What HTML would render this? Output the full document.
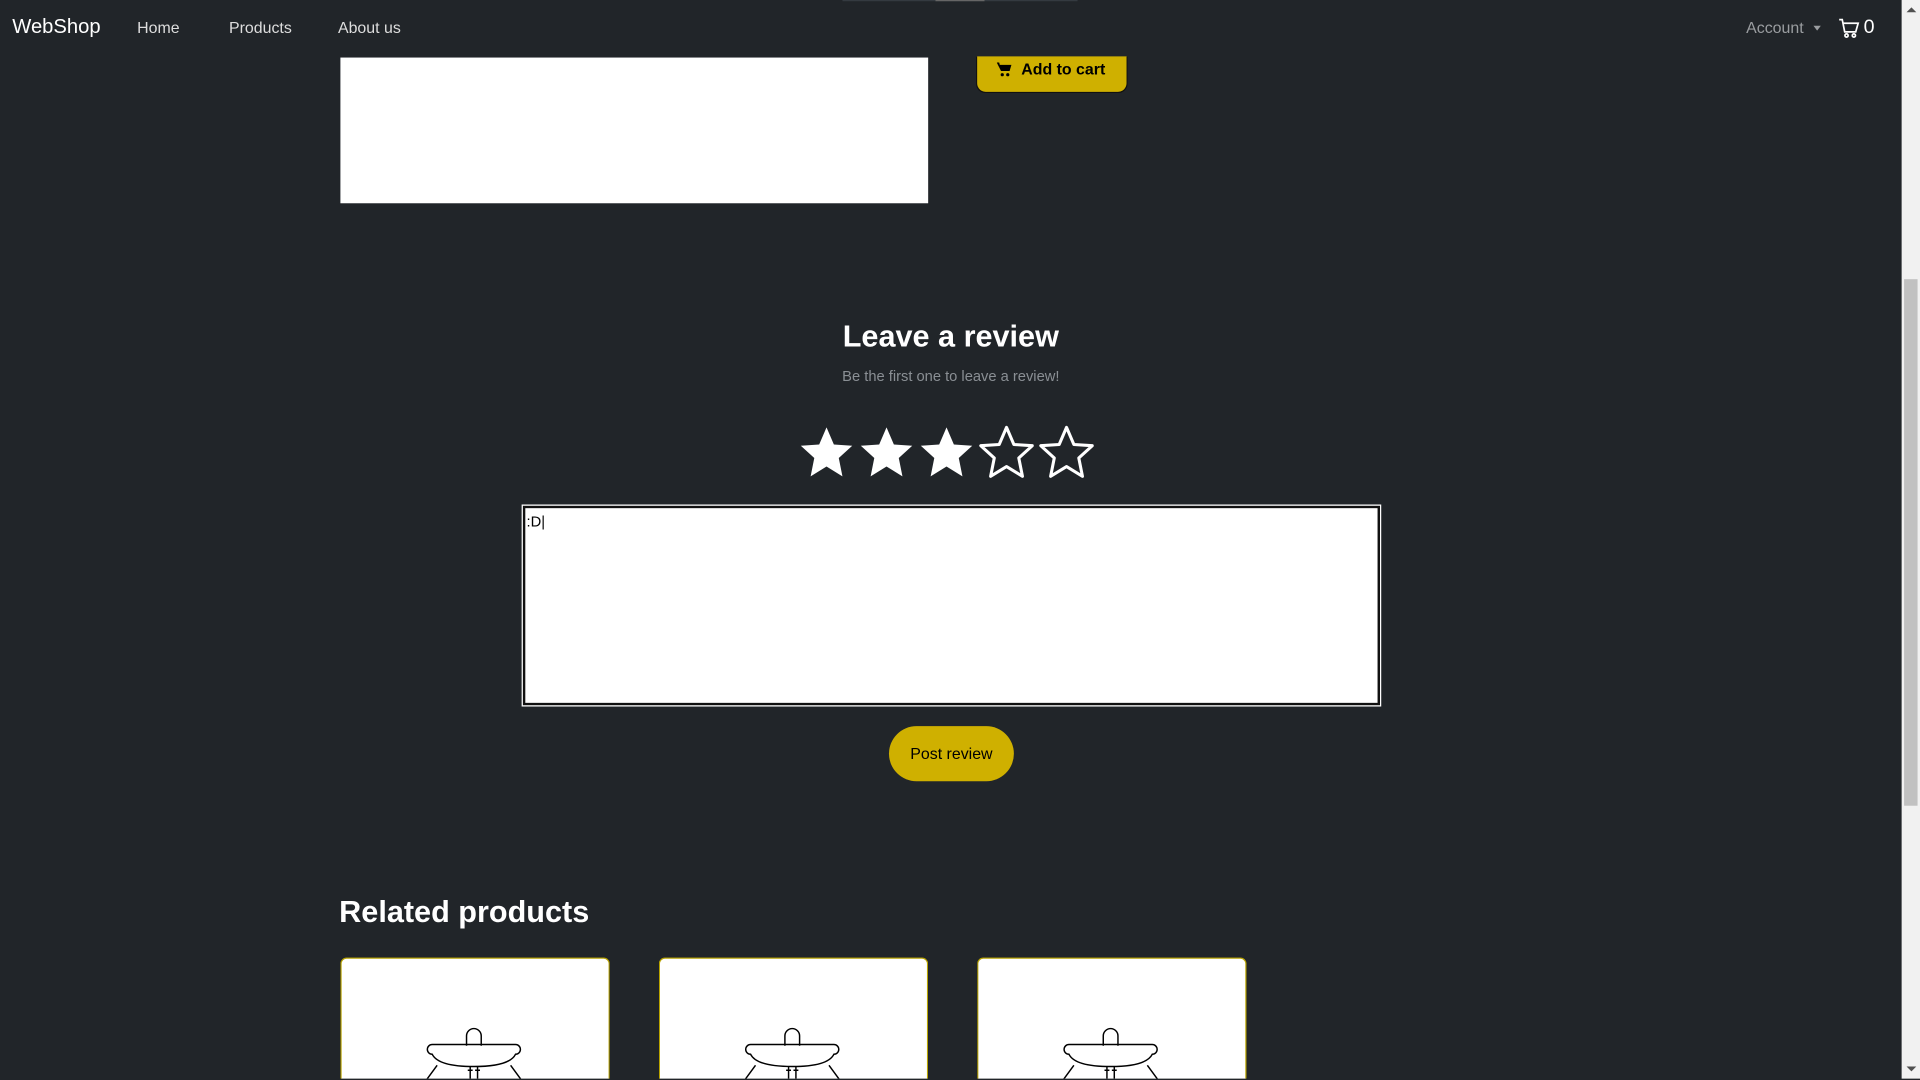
<!DOCTYPE html>
<html><head><meta charset="utf-8"><style>
html,body{margin:0;padding:0;background:#212529;overflow:hidden;width:1920px;height:1080px}
#w{position:absolute;left:0;top:0;width:1568px;height:881px;overflow:hidden;transform:scale(1.22449);transform-origin:0 0;font-family:"Liberation Sans",sans-serif;color:#fff}
.a{position:absolute}
.nav{font-size:13px;color:#ddd;top:15px}
.card{position:absolute;top:782px;width:218px;height:98px;background:#fff;border:1px solid #b8a300;border-bottom:none;border-radius:5px 5px 0 0}
</style></head><body><div id="w">
<div class="a" style="left:688px;top:0;width:192px;height:1px;background:#343a40"></div>
<div class="a" style="left:764px;top:0;width:40px;height:1px;background:#666"></div>
<div class="a" style="left:10px;top:13px;font-size:16.5px;color:#fff">WebShop</div>
<div class="a nav" style="left:112px">Home</div>
<div class="a nav" style="left:187px">Products</div>
<div class="a nav" style="left:276px">About us</div>
<div class="a nav" style="left:1426px;color:#9a9da0">Account</div>
<div class="a" style="left:1481px;top:21px;width:0;height:0;border-left:3px solid transparent;border-right:3px solid transparent;border-top:4px solid #9a9da0"></div>
<svg class="a" style="left:1501px;top:14px" width="18" height="18" viewBox="0 0 18 18" fill="none" stroke="#fff" stroke-width="1.4"><path d="M1 2h2.5l2 10h9l2-7H4.5"/><circle cx="7" cy="15" r="1.3"/><circle cx="13" cy="15" r="1.3"/></svg>
<div class="a" style="left:1522px;top:14px;font-size:16px;color:#fff">0</div>

<div class="a" style="left:278px;top:47px;width:480px;height:119px;background:#fff"></div>
<div class="a" style="left:797px;top:46px;width:122px;height:29px;background:#cfb000;border:1px solid #111;border-top:none;border-radius:0 0 8px 8px"></div>
<svg class="a" style="left:814px;top:50px" width="13" height="13" viewBox="0 0 13 13" fill="#000"><path d="M0 1h2l.5 2H12l-1.5 5H3.5z"/><circle cx="4.5" cy="11" r="1.3"/><circle cx="9" cy="11" r="1.3"/></svg>
<div class="a" style="left:834px;top:49px;font-size:13px;font-weight:bold;color:#000">Add to cart</div>

<div class="a" style="left:0;width:1553px;top:261px;text-align:center;font-size:25px;font-weight:bold">Leave a review</div>
<div class="a" style="left:0;width:1553px;top:300px;text-align:center;font-size:12px;color:#8a8f94">Be the first one to leave a review!</div>
<svg class="a" style="left:650px;top:347px" width="250" height="46" viewBox="0 0 250 46">
<defs><path id="s" d="M0-21L6-7 21-6 10 4 13 19 0 11-13 19-10 4-21-6-6-7z"/></defs>
<use href="#s" x="25" y="23" fill="#fff"/><use href="#s" x="74" y="23" fill="#fff"/><use href="#s" x="123" y="23" fill="#fff"/>
<use href="#s" x="172" y="23" fill="none" stroke="#fff" stroke-width="2.5" stroke-linejoin="round"/><use href="#s" x="221" y="23" fill="none" stroke="#fff" stroke-width="2.5" stroke-linejoin="round"/>
</svg>
<div class="a" style="left:427px;top:413px;width:696px;height:159px;background:#fff;border:2px solid #111;outline:1px solid #fff"></div>
<div class="a" style="left:430px;top:419px;font-size:12px;color:#000">:D|</div>
<div class="a" style="left:726px;top:593px;width:102px;height:45px;background:#cfb000;border-radius:23px;color:#000;font-size:13px;text-align:center;line-height:45px">Post review</div>
<div class="a" style="left:277px;top:731px;font-size:25px;font-weight:bold">Related products</div>
<div class="card" style="left:278px"></div>
<div class="card" style="left:538px"></div>
<div class="card" style="left:798px"></div>
<svg class="a" style="left:340px;top:835px" width="700" height="46" viewBox="0 0 700 46">
<defs><g id="b" fill="none" stroke="#000" stroke-width="1.2"><path d="M41 19v-8a6 6 0 0 1 12 0v8"/><path d="M13 18h68a4 4 0 0 1 0 8q-5 10-34 10q-29 0-34-10a4 4 0 0 1 0-8z"/><path d="M44 36v10M50 36v10M42 39h4M48 39h4"/><path d="M17 35L6 50M77 35l11 15"/></g></defs>
<use href="#b" x="0"/><use href="#b" x="260"/><use href="#b" x="520"/>
</svg>
<div class="a" style="left:1553px;top:0;width:15px;height:881px;background:#f1f1f1"></div>
<div class="a" style="left:1555px;top:228px;width:11px;height:430px;background:#c1c1c1"></div>
<div class="a" style="left:1557px;top:6px;width:0;height:0;border-left:4px solid transparent;border-right:4px solid transparent;border-bottom:4px solid #505050"></div>
<div class="a" style="left:1557px;top:871px;width:0;height:0;border-left:4px solid transparent;border-right:4px solid transparent;border-top:4px solid #505050"></div>
</div></body></html>
